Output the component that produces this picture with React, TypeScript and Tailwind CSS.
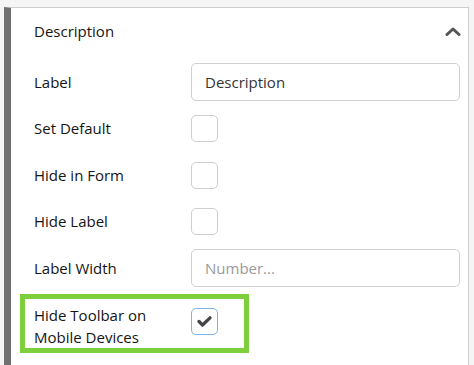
import { ReactNode } from "react";

const font = { fontFamily: '"Open Sans", "Noto Sans", sans-serif' };

function Row({ label, children }: { label: string; children: ReactNode }) {
  return (
    <div className="flex h-[38px] items-center">
      <div className="w-[157px] shrink-0 text-[15px] text-[#151515]">{label}</div>
      <div className="flex flex-1 items-center">{children}</div>
    </div>
  );
}

function Box({ checked = false }: { checked?: boolean }) {
  return (
    <div
      className={`flex h-[27px] w-[27px] items-center justify-center rounded-[5px] border bg-white ${
        checked ? "border-[#7db4e8]" : "border-[#cfcfcf]"
      }`}
    >
      {checked && (
        <svg width="15" height="11" viewBox="0 0 15 11" fill="none">
          <path d="M2 5.5 L5.5 9 L13 1.8" stroke="#454545" strokeWidth="3.2" strokeLinecap="round" strokeLinejoin="round" />
        </svg>
      )}
    </div>
  );
}

function TextBox({ value, placeholder }: { value?: string; placeholder?: string }) {
  return (
    <div className="flex h-[38px] w-full items-center rounded-[5px] border border-[#cfcfcf] bg-white px-[13px] text-[15px]">
      {value ? <span className="text-[#333]">{value}</span> : <span className="text-[#9a9a9a]">{placeholder}</span>}
    </div>
  );
}

export default function App() {
  return (
    <div className="h-[365px] overflow-hidden bg-[#f5f5f5] pt-[7px] pr-[5px] pl-[4px]" style={font}>
      <div className="h-[400px] border-t border-r border-l-[7px] border-t-[#cccccc] border-r-[#cccccc] border-l-[#707070] bg-white">
        <div className="flex h-[46px] items-center justify-between pr-[7px] pl-[23px]">
          <span className="text-[15px] text-[#151515]">Description</span>
          <svg width="16" height="9" viewBox="0 0 16 9" fill="none">
            <path d="M2 7.5 L8 2 L14 7.5" stroke="#555" strokeWidth="3" strokeLinecap="round" strokeLinejoin="round" />
          </svg>
        </div>
        <div className="flex flex-col gap-[8.5px] pt-[9px] pr-[8px] pl-[23px]">
          <Row label="Label">
            <TextBox value="Description" />
          </Row>
          <Row label="Set Default">
            <Box />
          </Row>
          <Row label="Hide in Form">
            <Box />
          </Row>
          <Row label="Hide Label">
            <Box />
          </Row>
          <Row label="Label Width">
            <TextBox placeholder="Number..." />
          </Row>
          <div className="relative flex items-start">
            <div className="w-[157px] shrink-0 pt-[8px] text-[15px] leading-[22.5px] text-[#151515]">
              Hide Toolbar on
              <br />
              Mobile Devices
            </div>
            <div className="mt-[12px]">
              <Box checked />
            </div>
            <div className="pointer-events-none absolute top-[-2px] left-[-14px] h-[59px] w-[229px] border-[5px] border-[#7ecf3c]" />
          </div>
        </div>
      </div>
    </div>
  );
}
